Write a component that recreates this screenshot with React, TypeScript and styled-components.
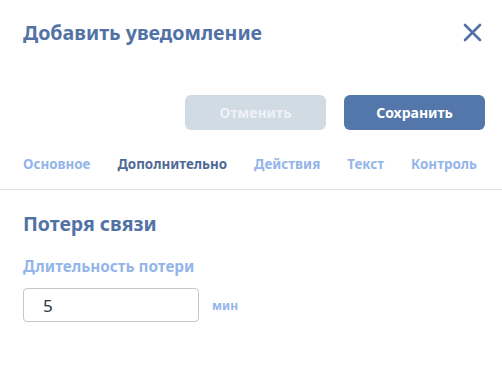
import React, { useState } from 'react';
import styled, { createGlobalStyle } from 'styled-components';

const GlobalStyle = createGlobalStyle`
  html, body {
    margin: 0;
    padding: 0;
    background: #ffffff;
  }
  body {
    font-family: 'Noto Sans', 'Open Sans', sans-serif;
  }
  * {
    box-sizing: border-box;
  }
`;

const Modal = styled.div`
  width: 502px;
  height: 384px;
  background: #ffffff;
  display: flex;
  flex-direction: column;
`;

const Header = styled.div`
  display: flex;
  align-items: center;
  justify-content: space-between;
  padding: 18px 19px 0 23px;
  height: 46px;
`;

const Title = styled.h1`
  margin: 0;
  font-size: 19.6px;
  font-weight: 700;
  color: #5272a6;
`;

const CloseButton = styled.button`
  border: none;
  background: none;
  padding: 0;
  width: 22px;
  height: 22px;
  display: flex;
  align-items: center;
  justify-content: center;
  cursor: pointer;
`;

const Actions = styled.div`
  display: flex;
  justify-content: flex-end;
  gap: 18px;
  padding: 49px 17px 0 0;
`;

const Button = styled.button<{ $primary?: boolean }>`
  width: 141px;
  height: 35px;
  border: none;
  border-radius: 6px;
  font-family: inherit;
  font-size: 14px;
  font-weight: 700;
  color: ${(p) => (p.$primary ? '#ffffff' : '#eef2f6')};
  background: ${(p) => (p.$primary ? '#5377aa' : '#d1dbe4')};
  cursor: pointer;
`;

const Tabs = styled.div`
  display: flex;
  gap: 27px;
  padding: 25px 0 0 23px;
  height: 60px;
  border-bottom: 1px solid #dde3ea;
`;

const Tab = styled.div<{ $active?: boolean }>`
  font-size: 13.4px;
  font-weight: 700;
  color: ${(p) => (p.$active ? '#4f6a96' : '#94b5ea')};
  cursor: pointer;
`;

const Section = styled.div`
  padding: 20px 23px 0;
  display: flex;
  flex-direction: column;
`;

const SectionTitle = styled.h2`
  margin: 0;
  font-size: 19.5px;
  font-weight: 700;
  color: #5272a6;
`;

const Label = styled.div`
  margin-top: 19px;
  font-size: 15.3px;
  font-weight: 700;
  color: #94b5ea;
`;

const FieldRow = styled.div`
  display: flex;
  align-items: center;
  gap: 13px;
  margin-top: 12px;
`;

const Input = styled.input`
  width: 176px;
  height: 34px;
  border: 1px solid #c3c7cf;
  border-radius: 4px;
  padding: 0 19px;
  font-family: inherit;
  font-size: 17px;
  color: #2d3440;
  outline: none;
`;

const Unit = styled.span`
  font-size: 12px;
  font-weight: 700;
  color: #94b5ea;
`;

const tabs = ['Основное', 'Дополнительно', 'Действия', 'Текст', 'Контроль'];

export default function App() {
  const [active, setActive] = useState(1);
  const [value, setValue] = useState('5');

  return (
    <>
      <GlobalStyle />
      <Modal>
        <Header>
          <Title>Добавить уведомление</Title>
          <CloseButton aria-label="close">
            <svg width="19" height="19" viewBox="0 0 19 19">
              <path d="M2 2 L17 17 M17 2 L2 17" stroke="#5272a6" strokeWidth="2.6" strokeLinecap="round" />
            </svg>
          </CloseButton>
        </Header>
        <Actions>
          <Button>Отменить</Button>
          <Button $primary>Сохранить</Button>
        </Actions>
        <Tabs>
          {tabs.map((t, i) => (
            <Tab key={t} $active={i === active} onClick={() => setActive(i)}>
              {t}
            </Tab>
          ))}
        </Tabs>
        <Section>
          <SectionTitle>Потеря связи</SectionTitle>
          <Label>Длительность потери</Label>
          <FieldRow>
            <Input value={value} onChange={(e) => setValue(e.target.value)} />
            <Unit>мин</Unit>
          </FieldRow>
        </Section>
      </Modal>
    </>
  );
}
